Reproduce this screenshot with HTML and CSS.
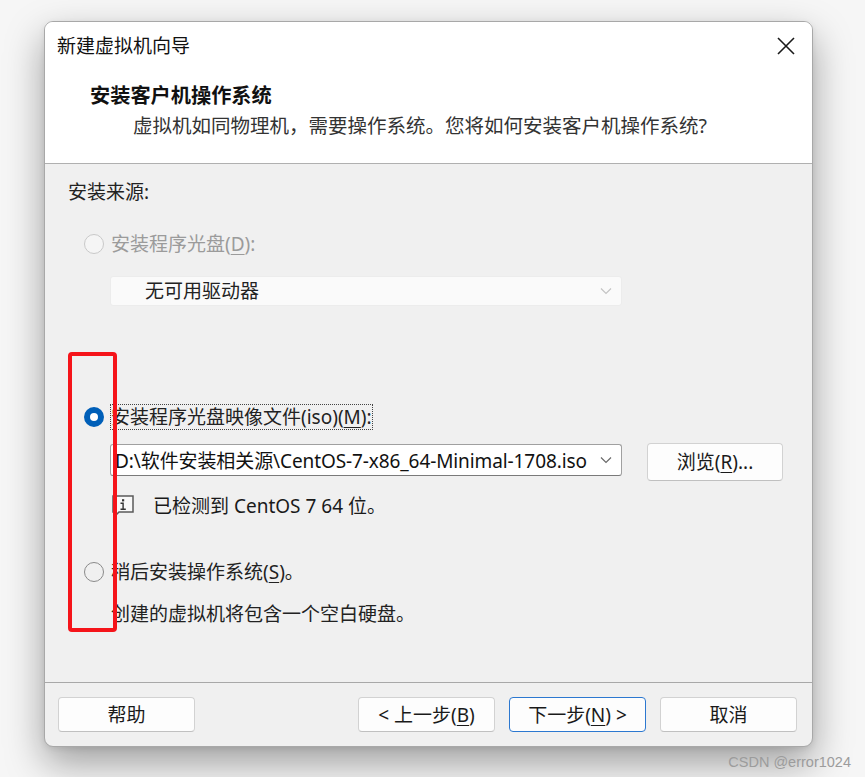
FILE: index.html
```html
<!DOCTYPE html>
<html lang="zh-CN">
<head>
<meta charset="utf-8">
<title>新建虚拟机向导</title>
<link rel="stylesheet" href="styles.css">
</head>
<body>
<div class="dialog">
  <div class="titlebar">
    <span class="title">新建虚拟机向导</span>
    <svg class="close" width="20" height="20" viewBox="0 0 20 20"><path d="M2 2 L18 18 M18 2 L2 18" stroke="#1a1a1a" stroke-width="1.6" fill="none"/></svg>
  </div>
  <div class="header">
    <div class="h-title">安装客户机操作系统</div>
    <div class="h-sub">虚拟机如同物理机，需要操作系统。您将如何安装客户机操作系统?</div>
  </div>
  <div class="body">
    <div class="section-label">安装来源:</div>

    <div class="opt opt1 disabled">
      <span class="radio radio-disabled"></span>
      <span class="label">安装程序光盘(<u>D</u>):</span>
    </div>
    <div class="select select-disabled">
      <span>无可用驱动器</span>
      <svg class="chev" width="12" height="8" viewBox="0 0 12 8"><path d="M1 1.5 L6 6.5 L11 1.5" stroke="#c4c4c4" stroke-width="1.2" fill="none"/></svg>
    </div>

    <div class="opt opt2">
      <span class="radio radio-checked"></span>
      <span class="label focus">安装程序光盘映像文件(iso)(<u>M</u>):</span>
    </div>
    <div class="file-row">
      <div class="select combo">
        <span>D:\软件安装相关源\CentOS-7-x86_64-Minimal-1708.iso</span>
        <svg class="chev" width="12" height="8" viewBox="0 0 12 8"><path d="M1 1.5 L6 6.5 L11 1.5" stroke="#6a6a6a" stroke-width="1.2" fill="none"/></svg>
      </div>
      <button class="btn browse">浏览(<u>R</u>)...</button>
    </div>
    <div class="info-row">
      <svg class="info" width="22" height="24" viewBox="0 0 22 24"><path d="M1 1 H21 V17 H7 L2.5 21.5 V17 H1 Z" fill="#f8f8f8" stroke="#5a5a5a" stroke-width="1.5" stroke-linejoin="miter"/><rect x="10" y="4.2" width="2.2" height="2.2" fill="#333"/><path d="M8.5 8.2 H11.1 V14.2 M8.5 14.2 H13.8" stroke="#333" stroke-width="1.4" fill="none"/></svg>
      <span>已检测到 CentOS 7 64 位。</span>
    </div>

    <div class="opt opt3">
      <span class="radio"></span>
      <span class="label">稍后安装操作系统(<u>S</u>)。</span>
    </div>
    <div class="note">创建的虚拟机将包含一个空白硬盘。</div>

    <div class="mark"></div>
  </div>
  <div class="footer">
    <button class="btn">帮助</button>
    <div class="spacer"></div>
    <button class="btn">&lt; 上一步(<u>B</u>)</button>
    <button class="btn primary">下一步(<u>N</u>) &gt;</button>
    <button class="btn">取消</button>
  </div>
</div>
<div class="watermark">CSDN @error1024</div>
</body>
</html>
```
FILE: styles.css
```css
html, body {
  margin: 0;
  padding: 0;
}
body {
  width: 865px;
  height: 777px;
  overflow: hidden;
  background: #f6f6f6;
  font-family: "Noto Sans", "Noto Sans CJK SC", sans-serif;
  color: #1a1a1a;
  position: relative;
}
.dialog {
  position: relative;
  margin: 21px 0 0 44px;
  width: 767px;
  height: 724px;
  border: 1px solid #a8a8a8;
  border-radius: 9px;
  background: #f0f0f0;
  box-shadow: 0 16px 38px rgba(0, 0, 0, 0.36), 0 2px 6px rgba(0, 0, 0, 0.08);
  display: flex;
  flex-direction: column;
  overflow: hidden;
}
.titlebar {
  height: 48px;
  background: #ffffff;
  display: flex;
  align-items: center;
  justify-content: space-between;
  padding: 0 16px 0 12px;
}
.title {
  font-size: 19px;
  line-height: 26px;
  color: #111;
}
.header {
  height: 94px;
  background: #ffffff;
  border-bottom: 1px solid #b0b0b0;
  box-sizing: border-box;
  padding: 11px 0 0 45px;
}
.h-title {
  font-size: 20.2px;
  font-weight: 700;
  line-height: 28px;
  color: #111;
}
.h-sub {
  margin: 3px 0 0 43px;
  font-size: 19.5px;
  line-height: 28px;
  color: #333;
}
.body {
  position: relative;
  height: 519px;
  padding: 15px 0 0 23px;
  box-sizing: border-box;
  font-size: 19px;
  border-bottom: 1px solid #a8a8a8;
}
.section-label {
  line-height: 26px;
  color: #222;
}
.opt {
  display: flex;
  align-items: center;
  height: 26px;
  padding-left: 16px;
}
.opt1 { margin-top: 26px; }
.opt2 { margin-top: 98px; }
.opt3 { margin-top: 41px; }
.radio {
  width: 20px;
  height: 20px;
  box-sizing: border-box;
  border-radius: 50%;
  border: 1.5px solid #8a8a8a;
  background: #f0f0f0;
  margin-right: 7px;
  flex: none;
}
.radio-disabled {
  border-color: #c9c9c9;
  background: #f5f5f5;
}
.radio-checked {
  border: 6px solid #005fb8;
  background: #ffffff;
}
.label {
  line-height: 26px;
  color: #222;
}
.disabled .label {
  color: #9b9b9b;
}
.focus {
  margin-left: -1px;
  border: 1px dotted #444;
  line-height: 24px;
}
.select {
  display: flex;
  align-items: center;
  justify-content: space-between;
  box-sizing: border-box;
  width: 512px;
  margin-left: 42px;
  border-radius: 3px;
}
.select-disabled {
  margin-top: 19px;
  height: 30px;
  background: #fafafa;
  border: 1px solid #ececec;
  padding: 0 9px 0 34px;
  color: #222;
}
.select-disabled span {
  line-height: 26px;
}
.file-row {
  display: flex;
  align-items: flex-start;
  margin-top: 13px;
}
.combo {
  margin-top: 1px;
  height: 32px;
  background: #ffffff;
  border: 1px solid #a0a0a0;
  border-bottom-color: #7a7a7a;
  padding: 0 9px 0 4px;
  font-size: 19px;
  color: #111;
}
.combo span {
  letter-spacing: -0.1px;
  white-space: nowrap;
}
.btn {
  font-family: "Noto Sans", "Noto Sans CJK SC", sans-serif;
  font-size: 19px;
  color: #1a1a1a;
  width: 137px;
  height: 35px;
  padding: 0;
  background: #fdfdfd;
  border: 1px solid #d2d2d2;
  border-bottom-color: #c0c0c0;
  border-radius: 4px;
  line-height: 26px;
}
.browse {
  margin-left: 25px;
  width: 136px;
  height: 38px;
}
.primary {
  border: 1px solid #2c78d0;
}
.info-row {
  display: flex;
  align-items: center;
  margin: 11px 0 0 44px;
  height: 26px;
  color: #1a1a1a;
}
.info {
  flex: none;
  width: 22px;
  height: 24px;
  margin: 4px 19px 0 0;
}
.note {
  margin: 16px 0 0 43px;
  line-height: 26px;
  color: #222;
}
.mark {
  position: absolute;
  left: 23px;
  top: 188px;
  width: 49px;
  height: 280px;
  box-sizing: border-box;
  border: 4px solid #f5141a;
  border-radius: 4px;
}
.footer {
  display: flex;
  padding: 14px 15px 0 13px;
  gap: 14px;
}
.spacer {
  flex: 1;
}
u {
  text-decoration-thickness: 1px;
  text-underline-offset: 3px;
}
.watermark {
  position: absolute;
  right: 14px;
  top: 752px;
  font-family: "Liberation Sans", sans-serif;
  font-size: 14.5px;
  line-height: 20px;
  color: #9c9c9c;
}
```
